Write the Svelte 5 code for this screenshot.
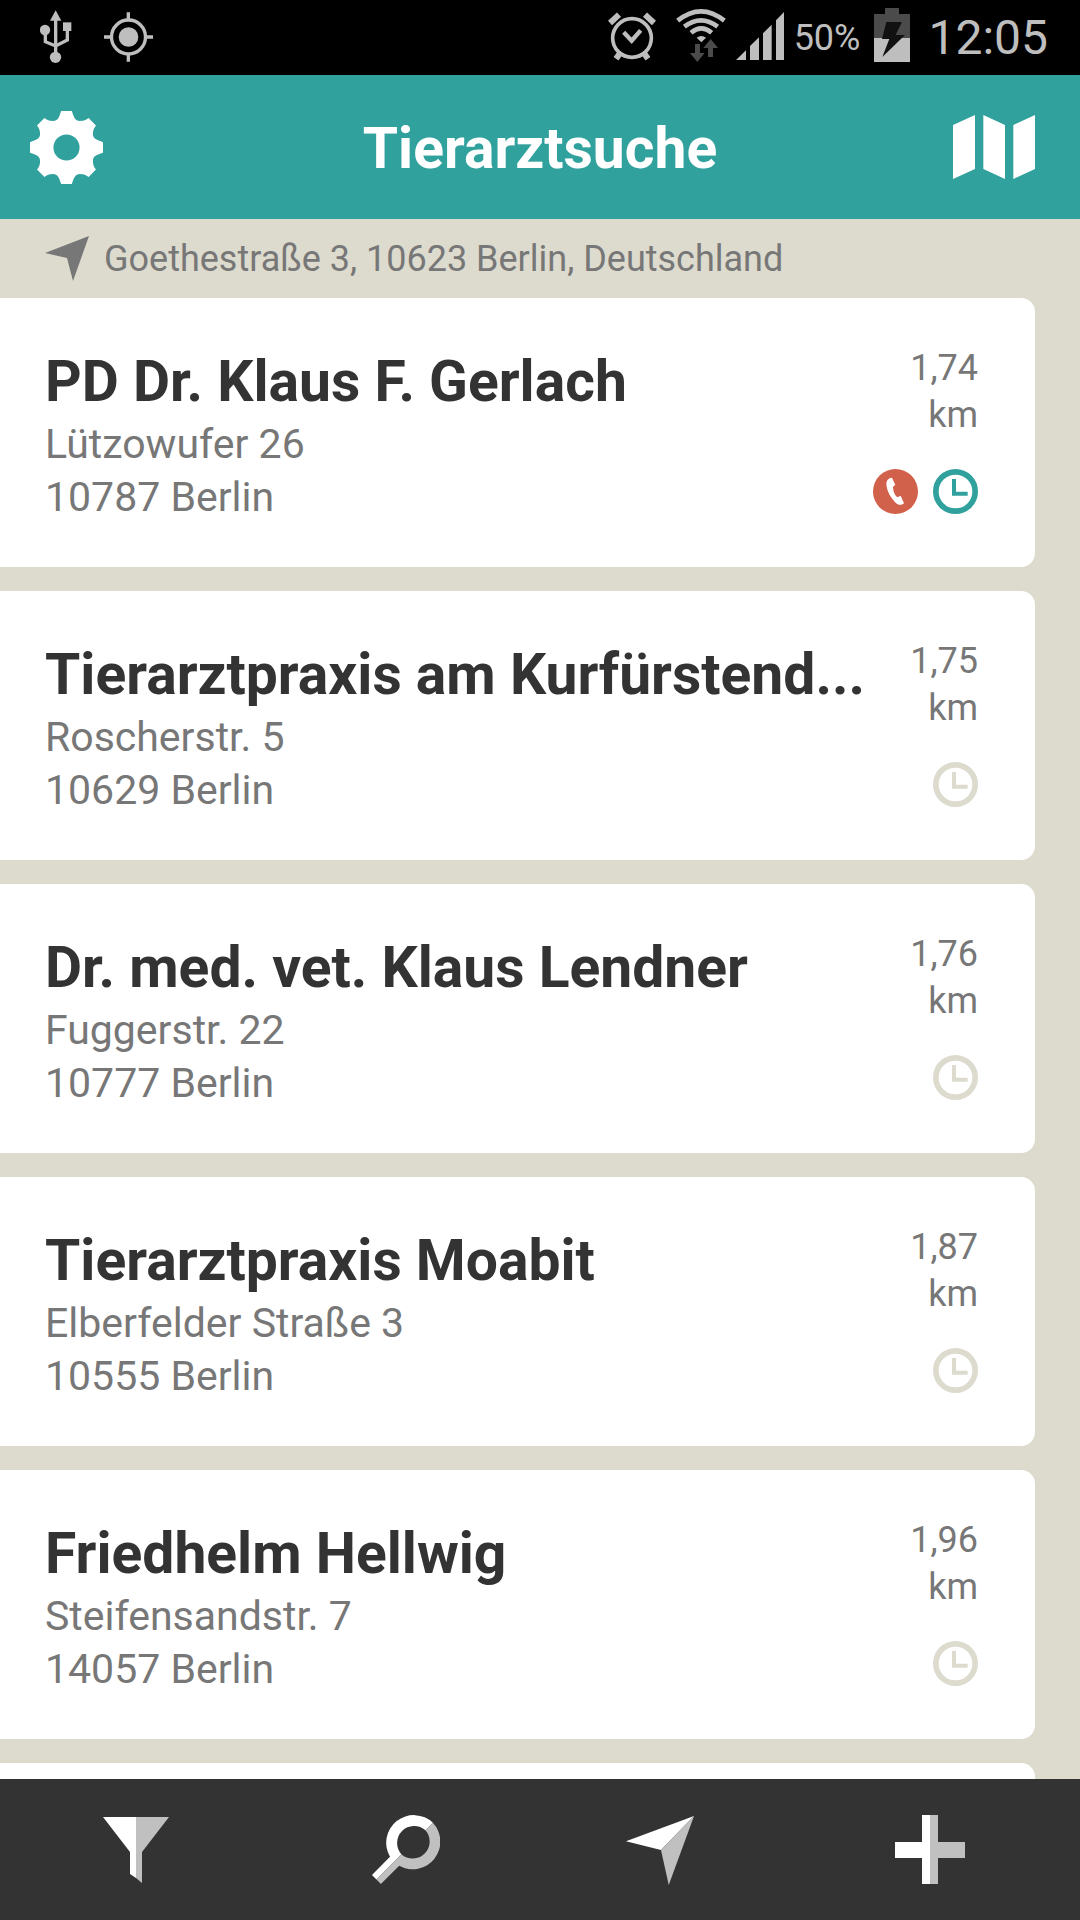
<script>
  const vets = [
    { name: 'PD Dr. Klaus F. Gerlach', street: 'Lützowufer 26', city: '10787 Berlin', distance: '1,74', open: true, emergency: true },
    { name: 'Tierarztpraxis am Kurfürstend...', street: 'Roscherstr. 5', city: '10629 Berlin', distance: '1,75' },
    { name: 'Dr. med. vet. Klaus Lendner', street: 'Fuggerstr. 22', city: '10777 Berlin', distance: '1,76' },
    { name: 'Tierarztpraxis Moabit', street: 'Elberfelder Straße 3', city: '10555 Berlin', distance: '1,87' },
    { name: 'Friedhelm Hellwig', street: 'Steifensandstr. 7', city: '14057 Berlin', distance: '1,96' }
  ];
</script>

<div class="screen">
  <div class="status">
    <svg class="usb" viewBox="120 0 96 225" aria-hidden="true">
      <path d="M167 31 184 62H150Z" fill="currentColor" />
      <circle cx="135" cy="90" r="15.500" fill="currentColor" />
      <path d="M189 67h25v26h-25z" fill="currentColor" />
      <circle cx="166.500" cy="172" r="17" fill="currentColor" />
      <path d="M167 55v110M136 95v30l31 13 35-18V88" fill="none" stroke="currentColor" stroke-width="10" />
    </svg>
    <svg class="gps" viewBox="312 0 147 225" aria-hidden="true">
      <circle cx="385.500" cy="111" r="29.500" fill="currentColor" />
      <circle cx="385.500" cy="111" r="51" fill="none" stroke="currentColor" stroke-width="10" />
      <path d="M385 37v22M385 163v22M312 111h22M437 111h22" stroke="currentColor" stroke-width="10" />
    </svg>
    <div class="system">
      <svg class="alarm" viewBox="51 0 144 225" aria-hidden="true">
        <g fill="none" stroke="currentColor">
          <circle cx="123" cy="114" r="58" stroke-width="11" />
          <path d="M98 97 122 122 149 91" stroke-width="13" />
          <path d="M57 69 84 44M189 69 162 44" stroke-width="18" />
          <path d="M86 161 75 176M160 161 171 176" stroke-width="18" />
        </g>
      </svg>
      <svg class="wifi" viewBox="255 0 150 225" aria-hidden="true">
        <g fill="none" stroke="currentColor" stroke-width="14">
          <path d="M260 62Q330 6 400 62" />
          <path d="M280 80Q330 42 380 80" />
          <path d="M300 98Q331 72 362 98" />
        </g>
        <path d="M317 113Q331 103 345 113L331 127Z" fill="currentColor" />
        <path class="dim" d="M312 132h15v27h14l-22 27-22-27h15zM351 171h15v-27h15l-22-27-22 27h14z" />
      </svg>
      <svg class="signal" viewBox="438 0 144 225" aria-hidden="true">
        <path d="M438 180 468 151V180ZM480 138 507 112V180H480ZM519 100 545 74V180H519ZM558 61 582 36V180H558Z" fill="currentColor" />
      </svg>
      <span class="percent">50%</span>
      <svg class="battery" viewBox="852 0 108 225" aria-hidden="true">
        <path class="dim" d="M885 24h42v18h33v72H852V42h33z" />
        <path d="M852 114h108v72H852z" fill="currentColor" />
        <path d="M889 66h47l-19 39h28l-68 66 21-54h-22z" fill="#111" />
      </svg>
      <time>12:05</time>
    </div>
  </div>

  <header>
    <button class="settings" aria-label="Einstellungen">
      <svg viewBox="-109 -109 218 218" aria-hidden="true">
        <path
          fill="currentColor"
          fill-rule="evenodd"
          d="M-16-109 16-109C22-90 26-79 40-79C53-79 58-82 66-88L88-66C82-58 79-53 79-40C79-26 90-22 109-16L109 16C90 22 79 26 79 40C79 53 82 58 88 66L66 88C58 82 53 79 40 79C26 79 22 90 16 109L-16 109C-22 90-26 79-40 79C-53 79-58 82-66 88L-88 66C-82 58-79 53-79 40C-79 26-90 22-109 16L-109-16C-90-22-79-26-79-40C-79-53-82-58-88-66L-66-88C-58-82-53-79-40-79C-26-79-22-90-16-109ZM-39 0A39 39 0 1 0 39 0A39 39 0 1 0-39 0Z"
        />
      </svg>
    </button>
    <h1>Tierarztsuche</h1>
    <button class="map" aria-label="Karte">
      <svg viewBox="1089 345 246 192" aria-hidden="true">
        <path fill="currentColor" d="M1089 375 1155 345V507L1089 537ZM1180 345 1245 375V537L1180 507ZM1270 375 1335 345V507L1270 537Z" />
      </svg>
    </button>
  </header>

  <main>
    <p class="place">
      <svg viewBox="0 0 44 45" aria-hidden="true"><path d="M44 0 0 17 22 22 28 45Z" fill="currentColor" /></svg>
      <span>Goethestraße 3, 10623 Berlin, Deutschland</span>
    </p>
    <div class="list">
      {#each vets as vet}
        <article>
          <div class="info">
            <h2>{vet.name}</h2>
            <address>{vet.street}<br />{vet.city}</address>
          </div>
          <div class="side">
            <p>{vet.distance}<br />km</p>
            <div class="badges">
              {#if vet.emergency}
                <svg viewBox="69 57 135 135" role="img" aria-label="Notdienst">
                  <circle cx="136.500" cy="124.500" r="67.500" fill="#d1614a" />
                  <path d="M126 83 136 105Q128 108 129 113C130 124 134 134 141 141Q146 141 152 137L162 160Q160 164 150 165Q142 165 134 155C120 140 111 122 109 104C109 93 113 84 126 83Z" fill="#fff" />
                </svg>
              {/if}
              <svg class="hours" class:open={vet.open} viewBox="249 57 135 135" role="img" aria-label="Öffnungszeiten">
                <circle cx="316.500" cy="124.500" r="59" fill="none" stroke="currentColor" stroke-width="17" />
                <path d="M306 87h12v38h35v12h-47z" fill="currentColor" />
              </svg>
            </div>
          </div>
        </article>
      {/each}
      <article></article>
    </div>
  </main>

  <nav>
    <button aria-label="Filter">
      <svg viewBox="-3 -3 70 72" aria-hidden="true">
        <path d="M0 0H33V61L27 57V35Z" fill="#fff" />
        <path d="M33 0H66L39 35V66L33 61Z" fill="#c0c0c0" />
      </svg>
    </button>
    <button aria-label="Suche">
      <svg viewBox="-2 -1 70 72" aria-hidden="true">
        <path d="M60.900 7.800A27.600 27.600 0 0 0 18 41.700L0 60 4.500 64.500 29.400 39.300A17 17 0 0 1 53.400 15.300Z" fill="#fff" />
        <path d="M60.900 7.800A27.600 27.600 0 0 1 27.200 50.700L8.900 69 4.500 64.500 29.400 39.300A17 17 0 0 0 53.400 15.300Z" fill="#c0c0c0" />
      </svg>
    </button>
    <button aria-label="Standort">
      <svg viewBox="-1 -1 72 72" aria-hidden="true">
        <path d="M70 0 0 26 36 35Z" fill="#fff" />
        <path d="M70 0 36 35 44 71Z" fill="#c0c0c0" />
      </svg>
    </button>
    <button aria-label="Hinzufügen">
      <svg viewBox="0 -1 70 72" aria-hidden="true">
        <path d="M27 0H35V69H27V43H0V27H27Z" fill="#fff" />
        <path d="M35 0H43V27H70V43H43V69H35Z" fill="#c0c0c0" />
      </svg>
    </button>
  </nav>
</div>

<style>
  :global(body) {
    margin: 0;
  }
  .screen {
    height: 100vh;
    display: flex;
    flex-direction: column;
    background: #dddbce;
    color: #777;
    font-family: Roboto, 'Liberation Sans', sans-serif;
  }
  svg {
    display: block;
    flex: none;
  }
  h1, h2, p {
    margin: 0;
  }
  button {
    display: flex;
    align-items: center;
    justify-content: center;
    margin: 0;
    padding: 0;
    border: 0;
    background: none;
    color: #fff;
    cursor: pointer;
  }

  .status {
    flex: none;
    height: 75px;
    display: flex;
    align-items: center;
    gap: 32px;
    padding: 0 32px 0 40px;
    background: #000;
    color: #bebebe;
  }
  .status svg {
    height: 75px;
  }
  .usb {
    width: 32px;
  }
  .gps {
    width: 49px;
  }
  .system {
    display: flex;
    align-items: center;
    gap: 10px;
    margin-left: auto;
  }
  .alarm {
    width: 48px;
    margin-right: 10px;
  }
  .wifi {
    width: 50px;
  }
  .signal {
    width: 48px;
  }
  .battery {
    width: 36px;
    margin: 0 8px 0 4px;
  }
  .dim {
    fill: #4b4b4b;
  }
  .percent {
    font-size: 36px;
  }
  time {
    font-size: 48px;
  }

  header {
    flex: none;
    height: 144px;
    display: grid;
    grid-template-columns: 1fr auto 1fr;
    align-items: center;
    background: #30a19d;
    color: #fff;
  }
  h1 {
    padding-top: 4px;
    font-size: 57px;
    line-height: 72px;
    font-weight: 700;
  }
  .settings {
    justify-self: start;
    margin-left: 30px;
  }
  .settings svg {
    width: 73px;
    height: 73px;
  }
  .map {
    justify-self: end;
    margin-right: 45px;
  }
  .map svg {
    width: 82px;
    height: 64px;
  }

  main {
    flex: 1;
    min-height: 0;
    overflow: hidden;
  }
  .place {
    height: 79px;
    display: flex;
    align-items: center;
    gap: 15px;
    padding: 0 45px;
    font-size: 36px;
    line-height: 47px;
  }
  .place svg {
    width: 44px;
    height: 45px;
  }
  .place span {
    padding-top: 2px;
  }
  .list {
    display: flex;
    flex-direction: column;
    gap: 24px;
    margin-right: 45px;
  }
  article {
    min-height: 269px;
    box-sizing: border-box;
    display: flex;
    justify-content: space-between;
    padding: 47px 57px 43px 45px;
    border-radius: 0 14px 14px 0;
    background: #fff;
  }
  .info {
    min-width: 0;
    padding-top: 1px;
  }
  h2 {
    color: #333;
    font-size: 57px;
    line-height: 72px;
    font-weight: 700;
    white-space: nowrap;
  }
  address {
    font-size: 41px;
    line-height: 53px;
    font-style: normal;
  }
  .side {
    flex: none;
    display: flex;
    flex-direction: column;
    align-items: flex-end;
    justify-content: space-between;
    text-align: right;
    font-size: 36px;
    line-height: 47px;
  }
  .badges {
    display: flex;
    gap: 15px;
    padding-bottom: 10px;
  }
  .badges svg {
    width: 45px;
    height: 45px;
  }
  .hours {
    color: #dddbce;
  }
  .open {
    color: #30a19d;
  }

  nav {
    flex: none;
    height: 141px;
    display: grid;
    grid-template-columns: 27fr 27fr 24fr 30fr;
    background: #333;
  }
  nav svg {
    width: 70px;
    height: 72px;
  }
</style>
